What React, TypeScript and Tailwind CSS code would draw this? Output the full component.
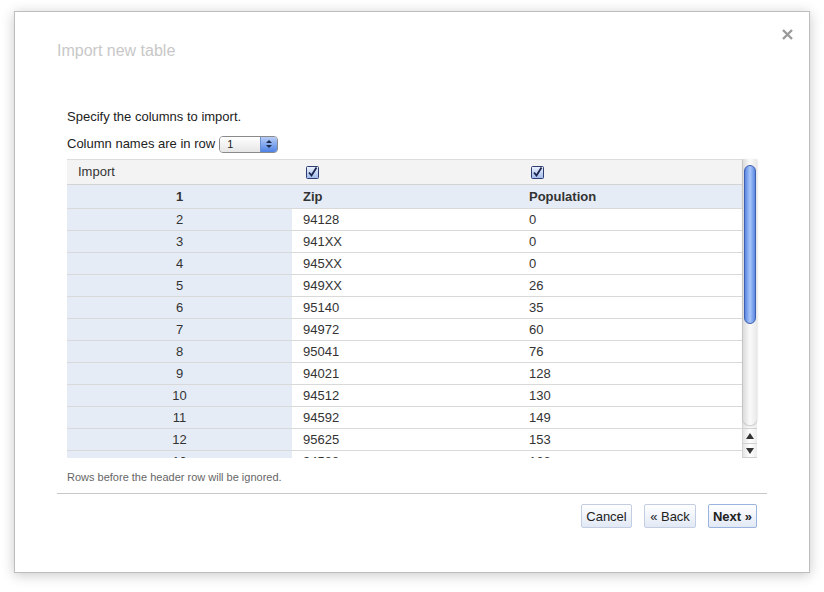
import React from 'react';

const rows = [
  ['2', '94128', '0'],
  ['3', '941XX', '0'],
  ['4', '945XX', '0'],
  ['5', '949XX', '26'],
  ['6', '95140', '35'],
  ['7', '94972', '60'],
  ['8', '95041', '76'],
  ['9', '94021', '128'],
  ['10', '94512', '130'],
  ['11', '94592', '149'],
  ['12', '95625', '153'],
  ['13', '94588', '168'],
];

const Check = () => (
  <svg width="13" height="13" viewBox="0 0 13 13">
    <defs>
      <linearGradient id="cb" x1="0" y1="0" x2="0" y2="1">
        <stop offset="0" stopColor="#eef3fd" />
        <stop offset="1" stopColor="#9fb9ea" />
      </linearGradient>
    </defs>
    <rect x="0.5" y="0.5" width="12" height="12" rx="1" fill="url(#cb)" stroke="#2d3d72" />
    <path d="M3 6.5 L5.5 9.5 L10.5 1.5" fill="none" stroke="#1b2550" strokeWidth="1.8" />
  </svg>
);

const Btn = ({ label, w, primary }: { label: string; w: string; primary?: boolean }) => (
  <button
    className={`${w} h-[24px] rounded-[2px] border bg-gradient-to-b from-white to-[#e2e9f5] text-[13px] text-[#222] leading-none whitespace-nowrap ${
      primary ? 'border-[#9bb3df] font-bold' : 'border-[#c3cee2]'
    }`}
  >
    {label}
  </button>
);

export default function App() {
  return (
    <div className="min-h-[592px] bg-white pt-[11px] pl-[14px] font-['Liberation_Sans',Arial,sans-serif]">
      <div className="relative w-[796px] h-[562px] border border-[#bdbdbd] bg-white shadow-[0_2px_12px_rgba(0,0,0,0.22)]">
        <svg className="absolute right-[16px] top-[17px]" width="11" height="11" viewBox="0 0 11 11">
          <path d="M1 1 L10 10 M10 1 L1 10" stroke="#9a9a9a" strokeWidth="2.4" />
        </svg>

        <div className="pl-[42px] pt-[29px] text-[16px] leading-[20px] text-[#c8c8c8]">Import new table</div>

        <div className="pl-[52px] pt-[48px] text-[13px] text-[#222]">
          <div className="leading-[16px]">Specify the columns to import.</div>
          <div className="mt-[10px] h-[18px] flex items-center gap-[4px]">
            <span>Column names are in row</span>
            <div className="flex h-[17px] w-[59px] rounded-[4px] border border-[#8a8a8a] overflow-hidden">
              <div className="flex-1 bg-gradient-to-b from-white to-[#e6e6e6] text-[11px] leading-[15px] pl-[7px]">1</div>
              <div className="w-[17px] bg-gradient-to-b from-[#b7cdf6] to-[#4f82e4] border-l border-[#6d8fcf] flex flex-col items-center justify-center gap-[2px]">
                <div className="w-0 h-0 border-l-[3px] border-r-[3px] border-b-[3px] border-l-transparent border-r-transparent border-b-[#1d2a4a]" />
                <div className="w-0 h-0 border-l-[3px] border-r-[3px] border-t-[3px] border-l-transparent border-r-transparent border-t-[#1d2a4a]" />
              </div>
            </div>
          </div>

          <div className="mt-[6px] w-[690px] h-[299px] flex text-[#333]">
            <div className="flex-1 overflow-hidden">
              <div className="grid grid-cols-3 h-[25px] border-t border-[#dcdcdc] bg-[#f3f3f3] items-center">
                <div className="pl-[11px]">Import</div>
                <div className="pl-[14px] flex"><Check /></div>
                <div className="pl-[14px] flex"><Check /></div>
              </div>
              <div className="grid grid-cols-3 h-[24px] border-t border-[#d4d4d4] bg-[#e6ecf6] items-center font-bold">
                <div className="text-center">1</div>
                <div className="pl-[11px]">Zip</div>
                <div className="pl-[12px]">Population</div>
              </div>
              {rows.map((r) => (
                <div key={r[0]} className="grid grid-cols-3 h-[22px] border-t border-[#d9d9d9]">
                  <div className="bg-[#e6ecf6] text-center leading-[21px]">{r[0]}</div>
                  <div className="pl-[11px] leading-[21px]">{r[1]}</div>
                  <div className="pl-[12px] leading-[21px]">{r[2]}</div>
                </div>
              ))}
            </div>
            <div className="w-[15px] flex flex-col border-l border-[#d4d4d4] bg-gradient-to-r from-[#e4e4e4] via-white to-[#ececec]">
              <div className="flex-1 pt-[6px] px-[1px] rounded-b-[7px] bg-gradient-to-r from-[#dcdcdc] via-[#fafafa] to-[#e8e8e8] shadow-[0_1px_2px_rgba(0,0,0,0.25)]">
                <div className="h-[159px] rounded-full border border-[#3f5fb0] bg-gradient-to-r from-[#5a86e0] via-[#a9c6fa] to-[#5b88e2]" />
              </div>
              <div className="h-[15px] mt-[3px] border-t border-[#d0d0d0] flex items-center justify-center">
                <div className="w-0 h-0 border-l-[4px] border-r-[4px] border-b-[6px] border-l-transparent border-r-transparent border-b-[#333]" />
              </div>
              <div className="h-[15px] border-t border-[#d0d0d0] border-b flex items-center justify-center">
                <div className="w-0 h-0 border-l-[4px] border-r-[4px] border-t-[6px] border-l-transparent border-r-transparent border-t-[#333]" />
              </div>
            </div>
          </div>

          <div className="mt-[12px] text-[11px] leading-[14px] text-[#666]">Rows before the header row will be ignored.</div>
        </div>

        <div className="mx-[42px] mt-[9px] border-t border-[#c8c8c8]" />

        <div className="mt-[10px] pr-[52px] flex justify-end gap-[12px]">
          <Btn label="Cancel" w="w-[51px]" />
          <Btn label="« Back" w="w-[52px]" />
          <Btn label="Next »" w="w-[49px]" primary />
        </div>
      </div>
    </div>
  );
}
